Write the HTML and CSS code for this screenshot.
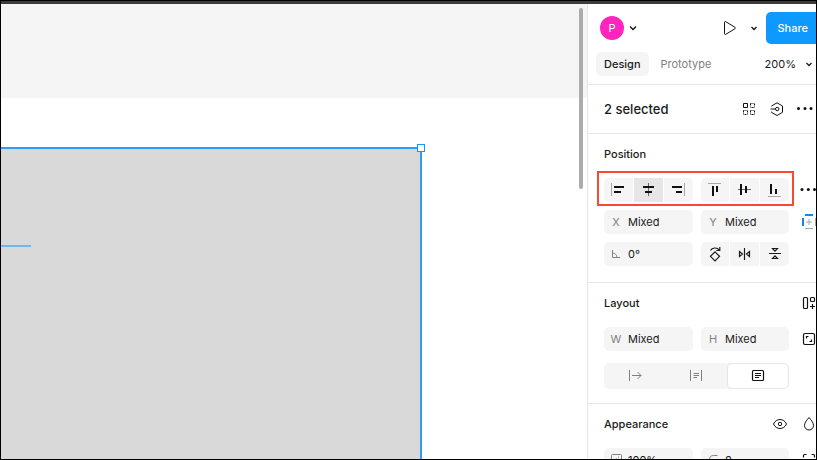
FILE: index.html
```html
<!DOCTYPE html>
<html lang="en">
<head>
<meta charset="utf-8">
<title>Design editor</title>
<link rel="stylesheet" href="styles.css">
</head>
<body>
<div class="titlebar"></div>
<div class="workspace">
  <main class="canvas">
    <div class="artboard-header"></div>
    <div class="selection"><span class="handle"></span></div>
    <div class="guide"></div>
    <div class="scrollbar"></div>
  </main>
  <aside class="panel">
    <div class="panel-content">
      <header class="panel-header">
        <div class="bar">
          <button class="avatar">P</button>
          <button class="icon-btn small" aria-label="Account menu"><svg class="chevron" viewBox="0 0 8 8"><path d="M1 2.500 4 5.500 7 2.500"/></svg></button>
          <button class="icon-btn push" aria-label="Present"><svg viewBox="0 0 24 24"><path d="M6.500 6.300v11.400c0 .7.6 1 1.200.7l9.300-5.700c.6-.4.6-1 0-1.400L7.700 5.600c-.6-.3-1.200 0-1.200.7z"/></svg></button>
          <button class="icon-btn" aria-label="Present options"><svg class="chevron" viewBox="0 0 8 8"><path d="M1.500 3 4 5.500 6.500 3"/></svg></button>
          <button class="share">Share</button>
        </div>
        <nav class="bar tabs">
          <button class="tab active">Design</button>
          <button class="tab">Prototype</button>
          <button class="zoom">200%<svg class="chevron" viewBox="0 0 8 8"><path d="M1.500 3 4 5.500 6.500 3"/></svg></button>
        </nav>
      </header>

      <section class="selected">
        <h1>2 selected</h1>
        <button class="icon-btn" aria-label="Select matching layers"><svg viewBox="0 0 24 24"><path d="M6.500 6.500h4v4h-4z"/><g stroke-dasharray="2 1 1 1" stroke-dashoffset="1"><path d="M13.500 6.500h4v4h-4zM6.500 13.500h4v4h-4zM13.500 13.500h4v4h-4z"/></g></svg></button>
        <button class="icon-btn" aria-label="Create component"><svg viewBox="0 0 24 24"><path d="M6.500 9.300V9l5.500-3.200L17.500 9v6.300L12 18.500 6.500 15.400v-.8M5.500 12h5"/><circle cx="12.200" cy="12" r="1.700"/></svg></button>
        <button class="icon-btn" aria-label="More actions"><svg class="solid" viewBox="0 0 24 24"><circle cx="5.500" cy="11.500" r="1.500"/><circle cx="12" cy="11.500" r="1.500"/><circle cx="18" cy="11.500" r="1.500"/></svg></button>
      </section>

      <section class="group">
        <h2>Position</h2>
        <div class="rows">
          <div class="row">
            <div class="segments">
              <button aria-label="Align left"><svg class="solid" viewBox="0 0 29 24"><path class="axis" d="M7 5h1v13H7z"/><path d="M10 8h10v2H10zM10 13h7v2h-7z"/></svg></button>
              <button class="pressed" aria-label="Align horizontal centers"><svg class="solid" viewBox="0 0 29 24"><path class="axis dark" d="M14 5h1v13h-1z"/><path d="M9 8h11v2H9zM11 13h7v2h-7z"/></svg></button>
              <button aria-label="Align right"><svg class="solid" viewBox="0 0 29 24"><path class="axis" d="M20 5h1v13h-1z"/><path d="M8 8h10v2H8zM12 13h6v2h-6z"/></svg></button>
            </div>
            <div class="segments narrow">
              <button aria-label="Align top"><svg class="solid" viewBox="0 0 28 24"><path class="axis" d="M7 5h13v1H7z"/><path d="M11 8h2v10h-2zM15 8h2v6h-2z"/></svg></button>
              <button aria-label="Align vertical centers"><svg class="solid" viewBox="0 0 29 24"><path class="axis dark" d="M8 11h13v1H8z"/><path d="M10 6h2v11h-2zM15 8h2v7h-2z"/></svg></button>
              <button aria-label="Align bottom"><svg class="solid" viewBox="0 0 29 24"><path class="axis" d="M8 18h13v1H8z"/><path d="M10 6h2v10h-2zM15 11h2v5h-2z"/></svg></button>
            </div>
            <button class="icon-btn" aria-label="More alignment"><svg class="solid" viewBox="0 0 24 24"><circle cx="5" cy="11.500" r="1.500"/><circle cx="11.300" cy="11.500" r="1.500"/><circle cx="17.500" cy="11.500" r="1.500"/></svg></button>
            <span class="highlight"></span>
          </div>
          <div class="row">
            <label class="field"><span>X</span><input value="Mixed"></label>
            <label class="field"><span>Y</span><input value="Mixed"></label>
            <button class="icon-btn" aria-label="Constraints"><svg class="solid" viewBox="0 0 24 24"><path class="blue" d="M5 8h2v8H5zM8 4h8v2H8z"/><path class="axis" d="M11.500 9h1v6h-1zM9 11.500h6v1H9zM8 18h8v1H8zM18 8h1v8h-1z"/></svg></button>
          </div>
          <div class="row">
            <label class="field"><span><svg viewBox="0 0 24 24"><path d="M8.500 8v7.500H16M8.500 11c2.500 0 4.500 2 4.500 4.500"/></svg></span><input value="0°" aria-label="Rotation"></label>
            <div class="segments narrow">
              <button aria-label="Rotate 90 degrees"><svg class="strong" viewBox="0 0 28 24"><path d="M14 9.800 18.500 14.300 14 18.800 9.500 14.300zM9.500 8.500C11 5.500 16 5 18.300 8M18.800 5v3.500h-3.500"/></svg></button>
              <button aria-label="Flip horizontal"><svg class="strong" viewBox="0 0 29 24"><path d="M14.500 6v12M9.500 9.500v5l3-2.500zM19.500 9.500v5l-3-2.500z"/></svg></button>
              <button aria-label="Flip vertical"><svg class="strong" viewBox="0 0 29 24"><path d="M9 11.500h12M12.500 6.500h5L15 9.200zM12.500 16.500h5L15 13.800z"/></svg></button>
            </div>
          </div>
        </div>
      </section>

      <section class="group">
        <h2>Layout<button class="icon-btn" aria-label="Use auto layout"><svg class="strong" viewBox="0 0 24 24"><rect x="6.500" y="6.500" width="4" height="11" rx="1"/><rect x="13.500" y="6.500" width="4" height="4" rx="1"/><path d="M15.500 13v5M13 15.500h5"/></svg></button></h2>
        <div class="rows loose">
          <div class="row">
            <label class="field"><span>W</span><input value="Mixed"></label>
            <label class="field"><span>H</span><input value="Mixed"></label>
            <button class="icon-btn" aria-label="Resize to fit"><svg class="strong" viewBox="0 0 24 24"><rect x="6.500" y="6.500" width="11" height="11" rx="1.500"/><path d="M9.500 11.500v-2h2M14.500 12.500v2h-2"/></svg></button>
          </div>
          <div class="row">
            <div class="sizing">
              <button aria-label="Auto width"><svg viewBox="0 0 24 24"><path d="M6.500 6v11M9 11.500h9M14.500 8 18 11.500 14.500 15"/></svg></button>
              <button aria-label="Auto height"><svg viewBox="0 0 24 24"><path d="M6.500 6v11M17.500 6v11M9.500 9.500H15M9.500 11.500H15M9.500 13.500h3.500"/></svg></button>
              <button class="chosen" aria-label="Fixed size"><svg class="strong" viewBox="0 0 24 24"><rect x="6.500" y="6.500" width="11" height="10" rx="1"/><path d="M9 9.500h6M9 11.500h6M9 13.500h4"/></svg></button>
            </div>
          </div>
        </div>
      </section>

      <section class="group">
        <h2>Appearance
          <button class="icon-btn eye" aria-label="Toggle visibility"><svg viewBox="0 0 24 24"><path d="M5.500 12C8 6 16 6 18.500 12 16 18 8 18 5.500 12z"/><circle cx="12" cy="12" r="1.700"/></svg></button>
          <button class="icon-btn" aria-label="Blend mode"><svg viewBox="0 0 24 24"><path d="M12 5.500c2 2.500 4.500 5 4.500 8a4.500 4.500 0 0 1-9 0c0-3 2.500-5.500 4.500-8z"/></svg></button>
        </h2>
        <div class="rows">
          <div class="row">
            <label class="field"><span><svg viewBox="0 0 24 24"><rect x="7.500" y="6.500" width="10" height="10" rx="1"/><path d="M14 9h1M12 11h1M14 11h1M10 13h1"/></svg></span><input value="100%" aria-label="Opacity"></label>
            <label class="field"><span><svg viewBox="0 0 24 24"><path d="M8.500 16.500v-5c0-2 1-4 4-4h4"/></svg></span><input value="0" aria-label="Corner radius"></label>
            <button class="icon-btn" aria-label="Individual corners"><svg class="strong" viewBox="0 0 24 24"><path d="M6.500 9.500v-2q0-1 1-1h2M14.500 6.500h2q1 0 1 1v2M6.500 14.500v2q0 1 1 1h2M14.500 17.500h2q1 0 1-1v-2"/></svg></button>
          </div>
        </div>
      </section>
    </div>
  </aside>
</div>
</body>
</html>
```

FILE: styles.css
```css
* { box-sizing: border-box; }

body {
  margin: 0;
  height: 100vh;
  display: flex;
  flex-direction: column;
  overflow: hidden;
  border: 1px solid #000;
  background: #fff;
  color: #1a1a1a;
  font: 400 11px/16px Inter, sans-serif;
}

.titlebar { flex: none; height: 3px; background: #3c3c3c; }
.workspace { flex: 1; min-height: 0; display: flex; }

/* Canvas */
.canvas { position: relative; flex: 1; min-width: 0; overflow: hidden; }
.artboard-header { height: 94px; background: #f5f5f5; }
.selection {
  position: absolute;
  left: -4px;
  top: 143px;
  right: 165px;
  bottom: -4px;
  border: 2px solid #2c9cf5;
  background: #d9d9d9;
}
.handle {
  position: absolute;
  top: -5px;
  right: -5px;
  width: 8px;
  height: 8px;
  border: 1px solid #0d99ff;
  background: #fff;
}
.guide { position: absolute; left: 0; top: 241px; width: 30px; height: 2px; background: #72b6ec; }
.scrollbar { position: absolute; right: 4px; top: 4px; width: 4px; height: 181px; border-radius: 2px; background: #ababab; }

/* Panel */
.panel { flex: 0 0 229px; overflow: hidden; border-left: 1px solid #e6e6e6; background: #fff; }
.panel-content { width: 241px; }

button { margin: 0; padding: 0; border: 0; background: none; color: inherit; font: inherit; }
svg { display: block; width: 24px; height: 24px; fill: none; stroke: currentColor; stroke-width: 1; }
.strong { stroke-width: 1.2; }
.solid { fill: #111; stroke: none; }
.axis { fill: #a8a8a8; }
.axis.dark { fill: #666; }
.blue { fill: #0d8af0; }
.chevron { width: 8px; height: 8px; stroke-width: 1.3; }
.icon-btn { flex: none; display: flex; align-items: center; justify-content: center; width: 24px; height: 24px; color: #111; }
.small { width: 18px; }

.panel-header { display: grid; gap: 8px; padding: 8px; border-bottom: 1px solid #e6e6e6; }
.bar { display: flex; align-items: center; }
.avatar { width: 24px; height: 24px; margin-left: 4px; border-radius: 50%; background: #ff24bd; color: #fff; }
.push { margin-left: auto; }
.share { height: 32px; padding: 0 13px 0 12px; border-radius: 5px; background: #0d99ff; color: #fff; font-weight: 500; }
.tabs { gap: 4px; }
.tab { height: 24px; padding: 0 8px; border-radius: 5px; color: #808080; }
.active { background: #f5f5f5; color: #1a1a1a; font-weight: 500; }
.zoom { display: flex; align-items: center; gap: 9px; margin-left: auto; padding-right: 8px; }

.selected { display: flex; align-items: center; gap: 4px; height: 49px; padding: 0 12px 0 16px; border-bottom: 1px solid #e6e6e6; }
h1 { flex: 1; margin: 0; font-size: 13px; font-weight: 500; }

.group { padding: 0 8px 16px 16px; border-bottom: 1px solid #e6e6e6; }
h2 { display: flex; align-items: center; justify-content: space-between; gap: 5px; height: 40px; margin: 0 0 4px; font-size: 11px; font-weight: 500; }
.eye { margin-left: auto; }
.rows { display: grid; gap: 8px; }
.loose { gap: 12px; }
.row { position: relative; display: grid; grid-template-columns: 89px 88px 24px; gap: 8px; height: 24px; }

.field { display: grid; grid-template-columns: 24px 1fr; align-items: center; border-radius: 5px; background: #f5f5f5; overflow: hidden; }
.field span { display: flex; justify-content: center; color: #808080; }
input { width: 100%; min-width: 0; height: 24px; margin: 0; padding: 0; border: 0; background: none; color: #1a1a1a; font: inherit; }

.segments { display: grid; grid-template-columns: repeat(3, 1fr); gap: 1px; overflow: hidden; border-radius: 5px; }
.narrow { grid-template-columns: 28px 1fr 1fr; }
.segments button { background: #f5f5f5; }
.segments svg { width: 100%; }
.segments .pressed { background: #e6e6e6; }
.highlight { position: absolute; left: -7px; right: 27px; top: -7px; bottom: -4px; border: 2px solid #fa4835; }

.sizing { grid-column: span 2; display: grid; grid-template-columns: repeat(3, 1fr); border-radius: 5px; background: #f5f5f5; color: #808080; }
.sizing button { display: flex; align-items: center; justify-content: center; }
.sizing .chosen { border: 1px solid #e6e6e6; border-radius: 5px; background: #fff; color: #111; }
```
